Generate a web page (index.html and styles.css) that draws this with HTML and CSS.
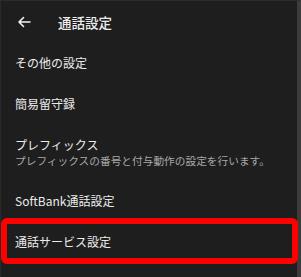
FILE: index.html
```html
<!DOCTYPE html>
<html lang="ja">
<head>
    <meta charset="UTF-8">
    <meta name="viewport" content="width=device-width, initial-scale=1.0">
    <title>通話設定</title>
    <link rel="stylesheet" href="styles.css">
</head>
<body>
    <div class="screen">
        <div class="header">
            <svg class="back" width="14" height="12" viewBox="0 0 14 12">
                <path d="M13 6H2M6.5 1.5L2 6l4.5 4.5" fill="none" stroke="#f2f2f2" stroke-width="1.6" stroke-linecap="round" stroke-linejoin="round"/>
            </svg>
            <span class="title">通話設定</span>
        </div>
        <div class="item">その他の設定</div>
        <div class="item">簡易留守録</div>
        <div class="item item-tall">
            <div>プレフィックス</div>
            <div class="sub">プレフィックスの番号と付与動作の設定を行います。</div>
        </div>
        <div class="item">SoftBank通話設定</div>
        <div class="item selected">通話サービス設定</div>
    </div>
</body>
</html>
```

FILE: styles.css
```css
html, body {
    margin: 0;
    padding: 0;
    background-color: #1e1e1e;
}
.screen {
    width: 296px;
    height: 276px;
    background-color: #1e1e1e;
    border-top: 1px solid #2c2c2c;
    border-left: 1px solid #2a2a2a;
    border-right: 4px solid #3c3c3c;
    font-family: "Noto Sans CJK JP", "Noto Sans", sans-serif;
    color: #ececec;
}
.header {
    height: 41px;
    display: flex;
    align-items: center;
    padding-left: 16px;
}
.back {
    margin-top: 1px;
}
.title {
    margin-left: 27px;
    font-size: 13.5px;
    font-weight: 500;
}
.item {
    height: 41px;
    display: flex;
    flex-direction: column;
    justify-content: center;
    padding-left: 14px;
    font-size: 12px;
    line-height: 16px;
}
.item-tall {
    height: 56px;
}
.sub {
    font-size: 10.7px;
    line-height: 15px;
    color: #a8a8a8;
}
.selected {
    position: relative;
}
.selected::after {
    content: "";
    position: absolute;
    top: -3px;
    bottom: -2px;
    left: 0;
    right: -1px;
    border: 6px solid #ff0000;
    border-radius: 6px;
}
```
